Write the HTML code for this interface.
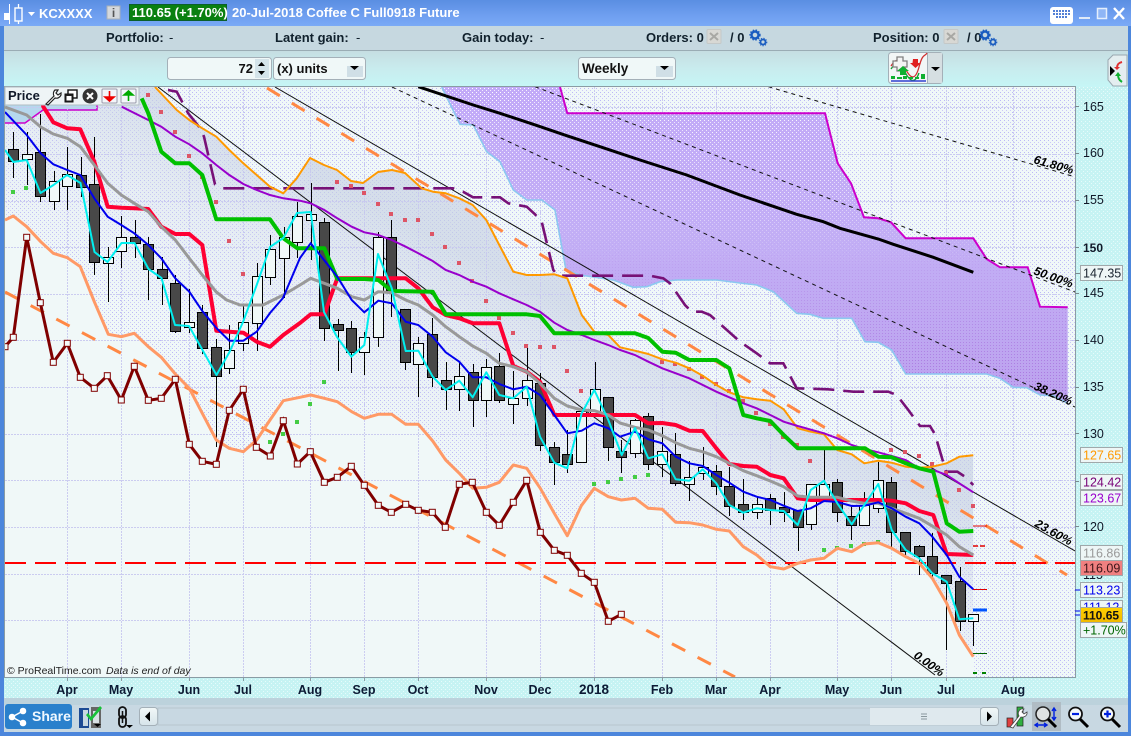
<!DOCTYPE html>
<html><head><meta charset="utf-8"><title>KCXXXX</title>
<style>
html,body{margin:0;padding:0;width:1131px;height:736px;overflow:hidden;background:#c8f4f4}
svg{display:block}
text{font-family:"Liberation Sans",sans-serif}
</style></head><body>
<svg width="1131" height="736" viewBox="0 0 1131 736" xmlns="http://www.w3.org/2000/svg">
<defs>
<linearGradient id="tb" x1="0" y1="0" x2="0" y2="1"><stop offset="0" stop-color="#5a8ee2"/><stop offset=".6" stop-color="#6f9ff0"/><stop offset="1" stop-color="#7aaaf6"/></linearGradient>
<linearGradient id="tool" x1="0" y1="0" x2="0" y2="1"><stop offset="0" stop-color="#c6dee2"/><stop offset=".5" stop-color="#c8ecee"/><stop offset="1" stop-color="#c6f6f6"/></linearGradient>
<linearGradient id="cl" x1="0" y1="87" x2="0" y2="405" gradientUnits="userSpaceOnUse"><stop offset="0" stop-color="#c2aaf8"/><stop offset=".5" stop-color="#c2aef5"/><stop offset="1" stop-color="#bca2ee"/></linearGradient>
<linearGradient id="band" gradientUnits="userSpaceOnUse" x1="0" y1="20" x2="-92" y2="204"><stop offset="0" stop-color="#c6d0e2" stop-opacity=".65"/><stop offset=".45" stop-color="#d0d6ea" stop-opacity=".3"/><stop offset="1" stop-color="#d4d8f0" stop-opacity="0"/></linearGradient>
<linearGradient id="btn" x1="0" y1="0" x2="0" y2="1"><stop offset="0" stop-color="#f2f8f8"/><stop offset="1" stop-color="#d6e4ea"/></linearGradient>
<linearGradient id="gold" x1="0" y1="0" x2="0" y2="1"><stop offset="0" stop-color="#ffd000"/><stop offset="1" stop-color="#f0b800"/></linearGradient>
<linearGradient id="mt" gradientUnits="userSpaceOnUse" x1="0" y1="87" x2="0" y2="270"><stop offset="0" stop-color="#fff"/><stop offset=".6" stop-color="#aaa"/><stop offset="1" stop-color="#000"/></linearGradient>
<linearGradient id="mb" gradientUnits="userSpaceOnUse" x1="0" y1="230" x2="0" y2="400"><stop offset="0" stop-color="#000"/><stop offset="1" stop-color="#fff"/></linearGradient>
<mask id="mtop" maskUnits="userSpaceOnUse" x="0" y="0" width="1131" height="736"><rect width="1131" height="736" fill="url(#mt)"/></mask>
<mask id="mbot" maskUnits="userSpaceOnUse" x="0" y="0" width="1131" height="736"><rect width="1131" height="736" fill="url(#mb)"/></mask>
<pattern id="dots" width="4" height="4" patternUnits="userSpaceOnUse"><rect x="0" y="0" width="1" height="1" fill="#bcb8f6"/><rect x="2" y="2" width="1" height="1" fill="#ccc8f8"/></pattern>
<pattern id="wd" width="4" height="4" patternUnits="userSpaceOnUse"><rect x="0" y="0" width="1" height="1" fill="#fff"/><rect x="2" y="2" width="1" height="1" fill="#f4eeff"/></pattern>
<pattern id="pd" width="3" height="3" patternUnits="userSpaceOnUse"><rect x="0" y="0" width="1" height="1" fill="#a060d8" opacity=".7"/></pattern>
<pattern id="ax" width="4" height="4" patternUnits="userSpaceOnUse"><rect width="4" height="4" fill="#c6f3f3"/><rect x="1" y="1" width="1" height="1" fill="#e6fbfb"/><rect x="3" y="3" width="1" height="1" fill="#e6fbfb"/></pattern>
<clipPath id="chart"><rect x="5" y="87" width="1070" height="590"/></clipPath>
<clipPath id="belowOr"><polygon points="5,87 155,87 176.7,110 189.3,120 202.3,128.3 216.3,136.7 229.3,150 243.3,163.3 256.7,175 270,186.7 283.3,193.3 296.7,178.3 310,158 324,165 337,170 351,181 363,183 378,172 392,170 405,173 421.7,188.3 433,191.7 445.7,193.3 459.3,198.3 472.7,205 486.3,220 499.3,245 513.3,271.7 526.7,275 540,275 554.3,274.3 567.3,278.3 581.7,315 594.3,331.7 608.3,335 620,347.3 635,350.7 648.3,354 662.3,359.3 675.7,362.7 689.3,368.3 702.7,375.7 716.3,385 729.3,392.3 743.3,397.3 756.7,399.3 770.3,400.7 783.7,409.3 797.7,428.3 810.7,431.7 824,434.3 837.3,450 851.7,454.3 864.3,463.3 878.3,460.7 891.7,462.7 905.7,466.7 919.3,467.7 932.3,466.7 946.7,463.3 959.3,456.7 973.3,455.3 973.3,677 5,677"/></clipPath>
<polygon id="cloud" points="560,87 567.3,113.3 825,113.3 837.7,163.3 851,183.3 864,217.3 878.3,218.3 891,222.3 905.7,238.3 973.3,238.3 986.7,259 1000,267.3 1027.7,267.3 1040,306.7 1067.7,307.3 1067.7,403.3 1053.3,395.7 1040,395 1026.7,387.7 1013.3,387.3 1000,378.3 986.7,374 905.7,374 891.7,350 878.3,342.3 865,341.7 851.7,318.3 823.3,318.3 810,314.3 796.7,313.3 773.3,291.7 756.7,285 740,283 716.7,280 676.7,280 660,281.7 646.7,286.7 633.3,287.3 613.3,280 580,275 566,270 555,210 541.7,200 526.7,200 513.3,190 500,161.7 486.7,151.7 473.3,125 460,124.3 441.7,87"/>
<marker id="sq" markerUnits="userSpaceOnUse" markerWidth="8" markerHeight="8" refX="4" refY="4"><rect x="1" y="1" width="6" height="6" fill="#f4fafa" stroke="#800000" stroke-width="1"/></marker>
</defs>

<!-- frame -->
<rect width="1131" height="736" fill="#4c86dc"/>
<rect x="0" y="0" width="1131" height="26" fill="url(#tb)"/>
<rect x="4" y="26" width="1124" height="25" fill="#c6d8e0"/>
<rect x="4" y="50" width="1124" height="1" fill="#9aacb4"/>
<rect x="4" y="51" width="1124" height="36" fill="url(#tool)"/>
<rect x="1075" y="87" width="53" height="611" fill="url(#ax)"/>
<rect x="4" y="677" width="1071" height="21" fill="url(#ax)"/>
<rect x="4" y="698" width="1124" height="7" fill="#bcd2dc"/>
<rect x="4" y="705" width="1124" height="27" fill="#c8d8e2"/>

<!-- chart background -->
<g clip-path="url(#chart)">
<rect x="5" y="87" width="1070" height="590" fill="#f0f8f8"/>
<polygon fill="url(#dots)" points="5,220 13.3,216 26.7,226.7 40.7,241.7 53.3,253.3 67.3,257.7 80.3,266.7 94.3,301.7 108.3,334.3 121.3,336.7 134.3,333.3 148.3,346.7 161.3,357.3 175.3,374 189.3,388.3 202.3,413.3 216.3,440 229.3,448.3 243.3,451.7 256.7,440 270,420 283.3,400.7 300,397.3 310.7,395 324.3,398.3 337.3,401.7 351.7,411.7 364.3,418.3 378.3,414.3 391.7,414.3 405.7,424.3 418.3,424.3 432.7,441 445.7,460 459.3,473.3 472.7,488.3 486.3,487.3 499.3,482.3 513.3,465 526.7,468.3 540.3,488.3 554.3,513.3 567.3,535.7 581.3,505.7 594.3,488.3 608.3,496.7 621.3,500 635,498.3 648.3,508.3 662.3,509.3 675.7,522.3 689.3,522.7 702.7,525 716.3,529.3 729.3,531 743.3,546.7 756.7,555 770.3,566.7 783.7,569 797.7,563.3 810.7,560 824,558.3 837.3,548.3 851.7,551.7 864.3,544 878.3,542.7 891.7,548.3 905.7,556.7 919.3,563.3 932.3,578.3 946.7,603.3 959.3,635 973.3,656.7 973.3,677 1075,677 1075,87 5,87"/>
<polygon clip-path="url(#belowOr)" fill="url(#band)" points="5,220 13.3,216 26.7,226.7 40.7,241.7 53.3,253.3 67.3,257.7 80.3,266.7 94.3,301.7 108.3,334.3 121.3,336.7 134.3,333.3 148.3,346.7 161.3,357.3 175.3,374 189.3,388.3 202.3,413.3 216.3,440 229.3,448.3 243.3,451.7 256.7,440 270,420 283.3,400.7 300,397.3 310.7,395 324.3,398.3 337.3,401.7 351.7,411.7 364.3,418.3 378.3,414.3 391.7,414.3 405.7,424.3 418.3,424.3 432.7,441 445.7,460 459.3,473.3 472.7,488.3 486.3,487.3 499.3,482.3 513.3,465 526.7,468.3 540.3,488.3 554.3,513.3 567.3,535.7 581.3,505.7 594.3,488.3 608.3,496.7 621.3,500 635,498.3 648.3,508.3 662.3,509.3 675.7,522.3 689.3,522.7 702.7,525 716.3,529.3 729.3,531 743.3,546.7 756.7,555 770.3,566.7 783.7,569 797.7,563.3 810.7,560 824,558.3 837.3,548.3 851.7,551.7 864.3,544 878.3,542.7 891.7,548.3 905.7,556.7 919.3,563.3 932.3,578.3 946.7,603.3 959.3,635 973.3,656.7 973.3,87 5,87"/>

<!-- small cloud top-left -->
<polygon fill="#b6d8ee" points="5,87 97,87 97,110 43,110 25,123 5,123"/>
<polyline fill="none" stroke="#cc00cc" stroke-width="1.5" points="5,123 25,123 43,110 97,110 97,97"/>

<!-- grid -->
<g stroke="#c8c8f0" stroke-width="1" stroke-dasharray="2 1" fill="none" opacity=".9">
<path d="M5 107.5H1075M5 154.5H1075M5 201.5H1075M5 247.5H1075M5 294.5H1075M5 340.5H1075M5 387.5H1075M5 434.5H1075M5 480.5H1075M5 527.5H1075M5 574.5H1075M5 620.5H1075"/>
<path d="M67.5 87V677M121.5 87V677M189.5 87V677M243.5 87V677M310.5 87V677M364.5 87V677M418.5 87V677M486.5 87V677M540.5 87V677M594.5 87V677M662.5 87V677M716.5 87V677M770.5 87V677M837.5 87V677M891.5 87V677M946.5 87V677M1013.5 87V677"/>
</g>

<!-- main cloud -->
<use href="#cloud" fill="url(#cl)"/>
<use href="#cloud" fill="url(#wd)" mask="url(#mtop)"/>
<use href="#cloud" fill="url(#pd)" mask="url(#mbot)"/>
<polyline fill="none" stroke="#8cc8f0" stroke-width="1.6" points="441.7,87 460,124.3 473.3,125 486.7,151.7 500,161.7 513.3,190 526.7,200 541.7,200 555,210 566,270 580,275 613.3,280 633.3,287.3 646.7,286.7 660,281.7 676.7,280 716.7,280 740,283 756.7,285 773.3,291.7 796.7,313.3 810,314.3 823.3,318.3 851.7,318.3 865,341.7 878.3,342.3 891.7,350 905.7,374 986.7,374 1000,378.3 1013.3,387.3 1026.7,387.7 1040,395 1053.3,395.7 1067.7,403.3"/>
<polyline fill="none" stroke="#cc00cc" stroke-width="2" points="560,87 567.3,113.3 825,113.3 837.7,163.3 851,183.3 864,217.3 878.3,218.3 891,222.3 905.7,238.3 973.3,238.3 986.7,259 1000,267.3 1027.7,267.3 1040,306.7 1067.7,307.3"/>

<!-- trend lines -->
<g fill="none" stroke="#111" stroke-width="1">
<path d="M275 87L1075 551"/>
<path d="M158 87L935 675"/>
<path d="M768.3 86.7L1072 176" stroke-dasharray="4 4"/>
<path d="M535 86.7L1075 292" stroke-dasharray="4 4"/>
<path d="M392 87L1075 407" stroke-dasharray="4 4"/>
</g>
<polyline fill="none" stroke="#000" stroke-width="3" points="418.3,86.7 473.3,105 500,113.3 533.3,124.3 566.7,135.7 600,146.7 640,160 686.7,175 740,195 796.7,214.3 823.3,221.7 840,228.3 878.3,239 893.3,244.3 933.3,257.3 973.3,272.3"/>

<!-- dashed orange -->
<g fill="none" stroke="#ff8844" stroke-width="3" stroke-dasharray="15 14">
<path d="M267 88L1067 575"/>
<path d="M5 292L735 677"/>
</g>
<!-- dashed purple -->
<polyline fill="none" stroke="#771177" stroke-width="2.6" stroke-dasharray="21 9" points="168,90 176.7,91.7 188,113 200,128 204,136.7 215,184.3 221.7,188.3 453,188.3 463,191.7 473,197.3 500,197.3 508.3,203.3 526.7,206.7 535,214.3 541.7,221.7 553.3,270 558.3,275.7 650,275.7 663.3,278.3 670,283.3 685,305 691.7,311.7 701.7,311.7 710,315 740,341.7 756.7,353.3 770,363.3 783.3,363.3 796.7,388.3 828.3,389.3 853.3,391.7 888.3,391.7 896.7,395 908.3,410 920,426 930,426 935,434.3 946,471.7 957.3,471.7 965,476.7 973.3,485"/>

<!-- red dash horizontal -->
<path d="M5 563H1075" stroke="#ff0000" stroke-width="2" stroke-dasharray="21 9" fill="none"/>

<!-- squares -->
<g fill="#dd5566"><path d="M146 93h4v4h-4zM159 110h4v4h-4zM173 130h4v4h-4zM187 154h4v4h-4zM200 175h4v4h-4zM214 200h4v4h-4zM227 239h4v4h-4zM241 272h4v4h-4zM335 180h4v4h-4zM349 184h4v4h-4zM362 191h4v4h-4zM376 202h4v4h-4zM389 212h4v4h-4zM403 218h4v4h-4zM416 218h4v4h-4zM430 232h4v4h-4zM443 245h4v4h-4zM457 261h4v4h-4zM470 279h4v4h-4zM484 299h4v4h-4zM497 316h4v4h-4zM511 331h4v4h-4zM524 344h4v4h-4zM538 345h4v4h-4zM552 345h4v4h-4zM565 369h4v4h-4zM579 389h4v4h-4zM660 360h4v4h-4zM673 362h4v4h-4zM687 367h4v4h-4zM700 375h4v4h-4zM714 382h4v4h-4zM727 389h4v4h-4zM741 399h4v4h-4zM754 411h4v4h-4zM768 422h4v4h-4zM781 435h4v4h-4zM795 443h4v4h-4zM808 459h4v4h-4zM889 448h4v4h-4zM903 450h4v4h-4zM917 454h4v4h-4zM930 462h4v4h-4zM944 471h4v4h-4zM957 488h4v4h-4zM971 504h4v4h-4z"/></g>
<g fill="#44cc44"><path d="M11 190h4v4h-4zM24 186h4v4h-4zM268 440h4v4h-4zM281 432h4v4h-4zM295 420h4v4h-4zM308 402h4v4h-4zM322 380h4v4h-4zM592 482h4v4h-4zM606 480h4v4h-4zM619 477h4v4h-4zM633 475h4v4h-4zM646 473h4v4h-4zM822 548h4v4h-4zM835 546h4v4h-4zM849 544h4v4h-4zM862 542h4v4h-4zM876 540h4v4h-4z"/></g>
<path d="M973 672h4v2h-4zM982 672h4v2h-4z" fill="#008000"/>

<!-- wicks -->
<path fill="none" stroke="#000" stroke-width="1" shape-rendering="crispEdges" d="M13.5 132V178M27.5 132V185M40.5 114V202M54.5 171V210M67.5 147V210M81.5 157V197M94.5 137V275M108.5 247V302M121.5 216V268M135.5 220V258M148.5 237V300M162.5 257V305M175.5 275V333M189.5 289V333M202.5 305V354M216.5 339V447M229.5 325V374M243.5 305V351M257.5 263V351M270.5 235V285M284.5 227V298M297.5 202V258M311.5 183V260M324.5 218V341M338.5 319V371M351.5 321V373M364.5 332V375M378.5 232V347M391.5 220V317M405.5 309V370M418.5 337V397M432.5 318V387M446.5 362V410M459.5 362V411M473.5 364V427M486.5 359V417M499.5 353V403M513.5 371V424M527.5 348V406M540.5 373V451M554.5 442V485M567.5 430V473M581.5 411V463M595.5 362V414M608.5 397V461M621.5 440V473M635.5 419V458M648.5 413V470M662.5 427V477M675.5 433V486M689.5 461V501M703.5 447V480M716.5 465V495M729.5 467V516M743.5 479V520M757.5 497V519M770.5 494V525M784.5 492V522M798.5 510V551M811.5 484V530M824.5 450V500M837.5 479V522M851.5 507V540M864.5 492V525M878.5 462V513M891.5 477V548M905.5 532V557M919.5 545V575M932.5 533V578M946.5 575V650M960.5 567V631M973.5 614V646"/>
<!-- white bodies -->
<path fill="#f0f8f8" stroke="#000" stroke-width="1" shape-rendering="crispEdges" d="M22.5 154.5h10v5h-10zM49.5 181.5h10v20h-10zM62.5 174.5h10v12h-10zM103.5 257.5h10v6h-10zM116.5 237.5h10v14h-10zM184.5 322.5h10v5h-10zM224.5 350.5h10v18h-10zM238.5 322.5h10v21h-10zM252.5 276.5h10v47h-10zM265.5 249.5h10v28h-10zM279.5 237.5h10v21h-10zM292.5 216.5h10v26h-10zM306.5 214.5h10v6h-10zM359.5 337.5h10v15h-10zM373.5 237.5h10v100h-10zM413.5 343.5h10v21h-10zM454.5 376.5h10v13h-10zM481.5 367.5h10v33h-10zM508.5 398.5h10v6h-10zM522.5 380.5h10v18h-10zM576.5 411.5h10v51h-10zM590.5 389.5h10v24h-10zM630.5 420.5h10v33h-10zM657.5 451.5h10v13h-10zM684.5 477.5h10v7h-10zM698.5 467.5h10v6h-10zM752.5 504.5h10v8h-10zM806.5 484.5h10v40h-10zM819.5 484.5h10v13h-10zM859.5 505.5h10v20h-10zM873.5 480.5h10v28h-10zM968.5 614.5h10v7h-10z"/>
<!-- dark bodies -->
<path fill="#484848" stroke="#000" stroke-width="1" shape-rendering="crispEdges" d="M8.5 149.5h10v12h-10zM35.5 152.5h10v44h-10zM76.5 175.5h10v12h-10zM89.5 184.5h10v78h-10zM130.5 237.5h10v6h-10zM143.5 244.5h10v25h-10zM157.5 269.5h10v9h-10zM170.5 283.5h10v48h-10zM197.5 312.5h10v36h-10zM211.5 347.5h10v29h-10zM319.5 222.5h10v106h-10zM333.5 324.5h10v6h-10zM346.5 328.5h10v24h-10zM386.5 237.5h10v53h-10zM400.5 309.5h10v53h-10zM427.5 334.5h10v43h-10zM441.5 380.5h10v9h-10zM468.5 372.5h10v28h-10zM494.5 366.5h10v34h-10zM535.5 383.5h10v62h-10zM549.5 447.5h10v15h-10zM562.5 454.5h10v10h-10zM603.5 397.5h10v50h-10zM616.5 451.5h10v6h-10zM643.5 416.5h10v48h-10zM670.5 454.5h10v29h-10zM711.5 471.5h10v15h-10zM724.5 486.5h10v20h-10zM738.5 504.5h10v8h-10zM765.5 498.5h10v12h-10zM779.5 507.5h10v5h-10zM793.5 510.5h10v17h-10zM832.5 482.5h10v30h-10zM846.5 516.5h10v9h-10zM886.5 482.5h10v50h-10zM900.5 532.5h10v19h-10zM914.5 546.5h10v10h-10zM927.5 556.5h10v17h-10zM941.5 575.5h10v8h-10zM955.5 581.5h10v40h-10z"/>

<!-- salmon band -->
<polyline fill="none" stroke="#ff9966" stroke-width="3" stroke-linejoin="round" points="5,220 13.3,216 26.7,226.7 40.7,241.7 53.3,253.3 67.3,257.7 80.3,266.7 94.3,301.7 108.3,334.3 121.3,336.7 134.3,333.3 148.3,346.7 161.3,357.3 175.3,374 189.3,388.3 202.3,413.3 216.3,440 229.3,448.3 243.3,451.7 256.7,440 270,420 283.3,400.7 300,397.3 310.7,395 324.3,398.3 337.3,401.7 351.7,411.7 364.3,418.3 378.3,414.3 391.7,414.3 405.7,424.3 418.3,424.3 432.7,441 445.7,460 459.3,473.3 472.7,488.3 486.3,487.3 499.3,482.3 513.3,465 526.7,468.3 540.3,488.3 554.3,513.3 567.3,535.7 581.3,505.7 594.3,488.3 608.3,496.7 621.3,500 635,498.3 648.3,508.3 662.3,509.3 675.7,522.3 689.3,522.7 702.7,525 716.3,529.3 729.3,531 743.3,546.7 756.7,555 770.3,566.7 783.7,569 797.7,563.3 810.7,560 824,558.3 837.3,548.3 851.7,551.7 864.3,544 878.3,542.7 891.7,548.3 905.7,556.7 919.3,563.3 932.3,578.3 946.7,603.3 959.3,635 973.3,656.7"/>
<!-- orange band -->
<polyline fill="none" stroke="#ff9900" stroke-width="2" stroke-linejoin="round" points="155,87 176.7,110 189.3,120 202.3,128.3 216.3,136.7 229.3,150 243.3,163.3 256.7,175 270,186.7 283.3,193.3 296.7,178.3 310,158 324,165 337,170 351,181 363,183 378,172 392,170 405,173 421.7,188.3 433,191.7 445.7,193.3 459.3,198.3 472.7,205 486.3,220 499.3,245 513.3,271.7 526.7,275 540,275 554.3,274.3 567.3,278.3 581.7,315 594.3,331.7 608.3,335 620,347.3 635,350.7 648.3,354 662.3,359.3 675.7,362.7 689.3,368.3 702.7,375.7 716.3,385 729.3,392.3 743.3,397.3 756.7,399.3 770.3,400.7 783.7,409.3 797.7,428.3 810.7,431.7 824,434.3 837.3,450 851.7,454.3 864.3,463.3 878.3,460.7 891.7,462.7 905.7,466.7 919.3,467.7 932.3,466.7 946.7,463.3 959.3,456.7 973.3,455.3"/>
<!-- purple MA -->
<polyline fill="none" stroke="#9900cc" stroke-width="2" points="121.7,106.7 148.3,120 161.3,126.7 175.3,136.7 189.3,144.3 202.3,153.3 216.3,165 229.3,175 243.3,184 256.7,190 270,195 283.3,198.3 300,200.7 310.7,203.3 324.3,210 337.3,218.3 351.7,226.7 364.3,232.3 378.3,235 391.7,240 405.7,246.7 418.3,253.3 432.7,261 445.7,270 459.3,275 472.7,281.7 486.3,286.7 499.3,293.3 513.3,299.3 526.7,305 540,311.7 554.3,322.7 567.3,330 581.7,335 594.3,340 608.3,345 620,350 635,355 648.3,361.7 662.3,368.3 689.3,378.3 716.3,391.7 729.3,397.3 743.3,403.3 756.7,408.3 770.3,415 783.7,421.7 797.7,426 824,433.3 837.3,438.3 851.7,445 864.3,449 878.3,452.3 891.7,456 905.7,460 919.3,468.3 933.3,470 946.7,475 959.3,483.3 973.3,492.3"/>
<!-- red thick -->
<polyline fill="none" stroke="#ff0033" stroke-width="4" stroke-linejoin="round" points="40,90 43.3,106.7 53.3,122.3 67.3,128.3 80.3,129.3 94.3,161.7 107.7,206.7 121.3,207.7 134.3,208.3 148.3,209 161.3,226.7 175.3,234 189.3,234 202.3,245 216.3,330.7 229.3,331.7 243.3,332.7 256.7,341.7 270,346.7 283.3,335 300,323 310.7,314.3 324.3,314.3 337.3,278.3 405.7,278.3 418.3,288.3 432.7,307.3 445.7,315 459.3,318.3 472.7,323.3 499.3,323.3 513.3,366 526.7,371.7 540,381.7 554.3,415 635,415 648.3,423.3 662.3,423 675.7,425 689.3,430.7 702.7,431 716.3,448.3 729.3,464 743.3,466 756.7,466.7 770.3,475 783.7,478.3 797.7,498.3 810.7,500 878.3,500 891.7,500.7 905.7,503.3 919.3,511 933.3,515 946.7,554 973.3,555"/>
<!-- green thick -->
<polyline fill="none" stroke="#00c000" stroke-width="4" stroke-linejoin="round" points="141.7,98.3 148.3,113.3 161.3,151.7 175.3,163.3 189.3,163.3 202.3,175 216.3,219.3 270,219.3 283.3,238.3 297.3,248.3 324.3,248.3 337.3,279 364.3,279 378.3,280 391.7,291 432.7,291.7 445.7,314.3 526.7,314.3 540,316 554.3,333.3 635,333.3 648.3,338 662.3,351.7 675.7,352.7 689.3,360 716.3,360 729.3,368.3 743.3,415 756.7,418.3 770.3,421 783.7,435 797.7,448.3 865,448.3 878.3,456.7 891.7,457.3 905.7,463.3 919.3,468.3 933.3,471.7 946.7,523.3 959.3,531.7 973.3,531"/>
<!-- gray MA -->
<polyline fill="none" stroke="#999" stroke-width="3" stroke-linejoin="round" points="5,107 26.7,115 40.7,127 53.3,134 67.3,138.3 80.3,146.7 94.3,165 107.7,183.3 121.3,195 134.3,203.3 148.3,211.7 161.3,226.7 175.3,240 189.3,258.3 202.3,275 216.3,292 226.7,300 240,305 263,305 283.3,295 300,285 310.7,278.3 324.3,283.3 337.3,288.3 351.7,296.7 364.3,300 378.3,291.7 391.7,292.7 405.7,300 418.3,305 432.7,315 445.7,326.7 459.3,336.7 472.7,346 486.3,353.3 499.3,363.3 513.3,366.7 526.7,371.7 540,383.3 554.3,398.3 567.3,406 581.7,410 594.3,410.7 608.3,415 620,423 635,427.3 648.3,430 662.3,435.7 675.7,442.7 689.3,448.3 702.7,451.7 716.3,456.7 729.3,463.3 743.3,470.7 756.7,475.7 770.3,481 783.7,486.7 797.7,496 810.7,497.3 837.3,497.3 851.7,501 864.3,503.3 878.3,503.3 891.7,508.3 905.7,513.3 919.3,518.3 933.3,526.7 946.7,535 959.3,546.7 973.3,555"/>
<!-- blue -->
<polyline fill="none" stroke="#0000ee" stroke-width="2" points="5,112 26.7,135 40.7,153.3 53.3,164.3 67.3,170 80.3,175 94.3,198.3 107.7,216.7 121.3,225 134.3,233.3 148.3,245 161.3,258.3 175.3,278.3 189.3,291.7 202.3,311 216.3,328 229.3,340.7 243.3,340.7 256.7,331.7 270,313 283,298 300,258 310.7,243.3 324,260 337.3,276.7 351.7,300 364.3,312.3 378.3,300.7 391.7,303.3 405.7,321.7 418.3,325 432.7,336.7 445.7,352.3 459.3,361.7 472.7,377.3 486.3,377.3 499.3,384 513.3,389.3 526.7,386.7 540,395 554.3,415 567.3,433.3 581.7,430.7 594.3,423.3 608.3,428.3 620,436.7 635,431.7 648.3,439.3 662.3,443.3 675.7,456.7 689.3,463.3 702.7,466 716.3,475 729.3,482.7 743.3,491.7 756.7,496.7 770.3,500 783.7,505.7 797.7,511 810.7,508.3 824,501 837.3,502 851.7,506 864.3,505.7 878.3,502.3 891.7,508.3 905.7,516.7 919.3,523.3 932.3,536.7 946.7,555 959.3,576.7 973.3,589.3"/>
<!-- cyan -->
<polyline fill="none" stroke="#00eeee" stroke-width="2" stroke-linejoin="round" points="5,150 13.3,162 26.7,160 40.5,193 53.5,185 67,175 80.5,183 94.5,252 107.5,262 121.5,243 134.5,243 148.5,269 161.5,278 175,325 189,326 202.5,350 216.5,375 229.5,352 243,322 256.7,285 270,247 283.3,238 297,213 310.7,212 324,312 337,337 351.3,356.7 364.3,345 378,254 391.7,288 405.7,351 418.3,350.7 432.7,376.7 445.7,390 459.3,380.7 472.7,397.3 486.3,372.3 499.3,395 513.3,398.3 526.7,386.7 540,436.7 554.3,462.7 567.3,468.3 581.7,413.3 594.3,390 608.3,420 621.7,455 635,428 648.3,458.3 662.3,454.3 675.7,479.3 689.3,480.7 702.7,469.3 716.3,483.3 729.3,505 743.3,512.7 756.7,508.3 770.3,510 783.7,511 797.7,525 810.7,490 824,480.7 837.3,503.3 851.7,524.3 864.3,505 878.3,484 891.7,530 905.7,550 919.3,558.3 932.3,573.3 946.7,581.7 959.3,619.3 973.3,618.3"/>
<!-- maroon -->
<polyline fill="none" stroke="#800000" stroke-width="3" marker-start="url(#sq)" marker-mid="url(#sq)" marker-end="url(#sq)" points="5,346.7 13.3,337.3 26.7,237.3 40.3,302.7 53.3,362.3 67.3,343.3 80.3,377.3 94.3,388.3 107.3,375.7 121.3,400 134.3,366.3 148.3,400.3 161.3,398.3 175.3,379.3 189.3,444.3 202.3,461.3 216.3,464.3 229.3,410.3 243.3,389.3 256.3,447.3 270.3,456 283.3,420.7 297.3,464 310.3,451.7 324.3,482.3 337.3,477.3 351.3,466.3 364.3,485.3 378.3,505.3 391.3,512.3 405.7,504.3 418.3,510.3 432.3,512.3 445.3,527.3 459.3,484.3 472.3,482.3 486.3,512.3 499.3,525.3 513.3,502.3 526.7,480.3 540.3,532.3 554.3,550.3 567.3,555.3 581.3,573.3 594.3,582.3 608.3,621.3 621.3,614.3"/>

<!-- end ticks -->
<path d="M973 526h14" stroke="#e00000" stroke-width="1"/>
<path d="M973 546h14" stroke="#e00000" stroke-width="1.5" stroke-dasharray="5 2"/>
<path d="M973 589.5h14" stroke="#e00000" stroke-width="1"/>
<path d="M973 610h14" stroke="#0055ff" stroke-width="3"/>
<path d="M973 653.5h14" stroke="#006000" stroke-width="1"/>

<!-- fib labels -->
<g font-size="12" font-weight="bold" fill="#000" font-style="italic">
<text transform="translate(1033,163) rotate(16)">61.80%</text>
<text transform="translate(1033,274) rotate(20)">50.00%</text>
<text transform="translate(1033,389) rotate(24)">38.20%</text>
<text transform="translate(1034,526) rotate(29)">23.60%</text>
<text transform="translate(913,657) rotate(36)">0.00%</text>
</g>

<text x="7" y="674" font-size="10.5" fill="#222">© ProRealTime.com</text>
<text x="106" y="674" font-size="10.5" fill="#222" font-style="italic">Data is end of day</text>
</g>

<!-- chart border -->
<rect x="4.5" y="86.5" width="1071" height="591" fill="none" stroke="#8a9ca4"/>

<!-- Price label -->
<rect x="5" y="87" width="134" height="18" fill="#eef4f6" stroke="#b0bcc2"/>
<text x="8" y="100" font-size="13" font-weight="bold" fill="#101828">Price</text>
<path d="M46 104l8-8a5 5 0 0 1 1-6l3 0-2 3 2 2 3-2 0 2a5 5 0 0 1-6 3l-7 7z" fill="#fff" stroke="#222" stroke-width="1.2"/>
<rect x="68" y="90" width="9" height="8" fill="#fff" stroke="#111" stroke-width="1.4"/><rect x="65" y="94" width="8" height="8" fill="#222" stroke="#111"/><rect x="66.5" y="96" width="5" height="4.5" fill="#fff"/>
<circle cx="90" cy="96" r="7.5" fill="#333"/><path d="M87 93l6 6M93 93l-6 6" stroke="#fff" stroke-width="2"/>
<rect x="102" y="89" width="15" height="14" rx="1" fill="#f4f6fa" stroke="#99a"/><path d="M109.5 91v6M105 97h9l-4.500 4z" stroke="#e00" fill="#e00" stroke-width="1.6"/>
<rect x="121" y="89" width="15" height="14" rx="1" fill="#f4f6fa" stroke="#99a"/><path d="M128.500 101v-6M124 95h9l-4.500-4z" stroke="#0a0" fill="#0a0" stroke-width="1.600"/>

<!-- title bar -->
<path d="M9.500 4V24" stroke="#fff"/>
<rect x="4" y="13" width="6" height="7" fill="#fff"/>
<rect x="15" y="8" width="7" height="13" fill="none" stroke="#fff" stroke-width="1.4"/>
<path d="M18.500 4v4M18.500 21v3" stroke="#fff" stroke-width="1.300"/>
<path d="M28 12h7l-3.500 4z" fill="#fff"/>
<text x="39" y="18" font-size="13" font-weight="bold" fill="#fff">KCXXXX</text>
<rect x="107" y="6" width="13" height="13" fill="#d4d8dc" stroke="#a8b0b8"/>
<text x="113.500" y="17" font-size="12" font-weight="bold" text-anchor="middle" fill="#555" font-family="Liberation Serif">i</text>
<rect x="129.500" y="4.500" width="97" height="16" fill="#0a8010" stroke="#0b5f2c"/>
<text x="132" y="17" font-size="13" font-weight="bold" fill="#fff">110.65 (+1.70%)</text>
<text x="232" y="17" font-size="13" font-weight="bold" fill="#fff">20-Jul-2018 Coffee C Full0918 Future</text>
<!-- window buttons -->
<rect x="1050" y="7" width="23" height="17" rx="3" fill="#fff"/>
<path d="M1053 11h17M1053 14h17M1056 17h11" stroke="#3b6fd0" stroke-width="1.800" stroke-dasharray="2 1"/>
<rect x="1079" y="17" width="11" height="2" fill="#dfeaf8"/>
<rect x="1097.500" y="8.500" width="9" height="10" fill="#8fb6f6" stroke="#e4eefc" stroke-width="1.500"/>
<path d="M1114 8l10 11M1124 8l-10 11" stroke="#fff" stroke-width="2.400"/>

<!-- toolbar text -->
<g font-size="13" font-weight="bold" fill="#10202c">
<text x="106" y="42">Portfolio:</text><text x="169" y="42" font-weight="normal">-</text>
<text x="275" y="42">Latent gain:</text><text x="356" y="42" font-weight="normal">-</text>
<text x="462" y="42">Gain today:</text><text x="540" y="42" font-weight="normal">-</text>
<text x="646" y="42">Orders: 0</text><text x="730" y="42">/ 0</text>
<text x="873" y="42">Position: 0</text><text x="967" y="42">/ 0</text>
</g>
<rect x="707" y="29.500" width="14" height="14" rx="1" fill="#d8d8d4" stroke="#c4c8c8"/><path d="M710 33l8 7M718 33l-8 7" stroke="#a8a8a4" stroke-width="2"/>
<rect x="944" y="29.500" width="14" height="14" rx="1" fill="#d8d8d4" stroke="#c4c8c8"/><path d="M947 33l8 7M955 33l-8 7" stroke="#a8a8a4" stroke-width="2"/>
<g fill="none" stroke="#1a5cc0">
<circle cx="755" cy="35" r="3.500" stroke-width="2.400"/><circle cx="755" cy="35" r="5" stroke-width="1.300" stroke-dasharray="1.500 1.500"/>
<circle cx="763" cy="42" r="2.500" stroke-width="1.800"/><circle cx="763" cy="42" r="3.800" stroke-width="1" stroke-dasharray="1.300 1.300"/>
<circle cx="985" cy="35" r="3.500" stroke-width="2.400"/><circle cx="985" cy="35" r="5" stroke-width="1.300" stroke-dasharray="1.500 1.500"/>
<circle cx="993" cy="42" r="2.500" stroke-width="1.800"/><circle cx="993" cy="42" r="3.800" stroke-width="1" stroke-dasharray="1.300 1.300"/>
</g>

<!-- inputs -->
<rect x="167.500" y="57.500" width="104" height="22" rx="3" fill="#f0f8f8" stroke="#a4b0b8"/>
<text x="253" y="73" font-size="13" font-weight="bold" text-anchor="end" fill="#111">72</text>
<rect x="255" y="59" width="14" height="19" fill="#d4e4ea"/>
<path d="M258 66h7l-3.500-4zM258 71h7l-3.500 4z" fill="#000"/>
<rect x="273.500" y="57.500" width="92" height="22" rx="3" fill="#f0f8f8" stroke="#a4b0b8"/>
<text x="277" y="73" font-size="13" font-weight="bold" fill="#111">(x) units</text>
<rect x="347" y="66" width="16" height="11" fill="#d0dfe6"/>
<path d="M350 66h9l-4.500 4z" fill="#000"/>
<rect x="578.500" y="57.500" width="97" height="22" rx="3" fill="#f0f8f8" stroke="#a4b0b8"/>
<text x="582" y="73" font-size="13.500" font-weight="bold" fill="#111">Weekly</text>
<rect x="656" y="66" width="17" height="11" fill="#d0dfe6"/>
<path d="M660 66h9l-4.500 4z" fill="#000"/>

<!-- indicator button -->
<rect x="888.500" y="52.500" width="54" height="31" rx="3" fill="#f2f6f6" stroke="#a4b0b8"/>
<path d="M927.500 53V83" stroke="#a4b0b8"/>
<rect x="928" y="53" width="14" height="30" fill="#d6dfe2"/>
<path d="M931 67h9l-4.500 4z" fill="#000"/>
<path d="M891 66c5-8 9-8 14 2s10 14 14-1 6-10 8-14" fill="none" stroke="#d03030" stroke-width="1.300"/>
<path d="M891 69c5-7 9-7 14 3s10 12 14 1" fill="none" stroke="#10a030" stroke-width="1.300"/>
<path d="M893 61h4v-4h6v4h4v6h-4v4h-6v-4h-4z" fill="#f4f4f4" stroke="#808080" stroke-width="1.300"/>
<path d="M900 75h6v-4h3l-6-5-6 5h3z" fill="#10b030"/>
<path d="M913 59h5v4h3l-5.500 5-5.500-5h2.500z" fill="#e02020"/>
<path d="M891 79h4v-3h-4zM897 79h5v-2h-5zM903 79h4v-3h-4zM909 79h4v-2h-4zM915 79h4v-2h-4zM921 79h4v-5h-4z" fill="#10b030"/>
<path d="M891 81h35" stroke="#3040d0" stroke-width="1.400"/>

<!-- right tab -->
<path d="M1127 55h-14l-5 5v20l5 6h14z" fill="#e4eef0" stroke="#9aa8b0"/>
<path d="M1115 70l-5 5v-10z" transform="translate(0,1)" fill="#000"/>
<path d="M1122 62c-4 1-5 3-5 6" fill="none" stroke="#e03030" stroke-width="2"/><path d="M1117 70l-3-3h6z" fill="#e03030"/>
<path d="M1122 82c-3-2-4-4-4-8" fill="none" stroke="#10b030" stroke-width="2"/><path d="M1118 72l-3 4h6z" fill="#10b030"/>

<!-- axis labels -->
<path d="M1075 106.500h4M1075 153.500h4M1075 200.500h4M1075 247.500h4M1075 293.500h4M1075 340.500h4M1075 387.500h4M1075 433.500h4M1075 526.500h4M1075 481.500h4M1075 273.500h5" stroke="#7a8a90" fill="none"/>
<g font-size="12.500" fill="#101828">
<text x="1083" y="111">165</text><text x="1083" y="157">160</text><text x="1083" y="204">155</text><text x="1083" y="252" font-weight="bold" font-size="12">150</text><text x="1083" y="297">145</text><text x="1083" y="344">140</text><text x="1083" y="391">135</text><text x="1083" y="438">130</text><text x="1083" y="531">120</text><text x="1083" y="579">115</text>
</g>
<g font-size="12.500" stroke="none">
<rect x="1080.500" y="265.500" width="42" height="15" fill="#eef6f6" stroke="#a0a8aa"/><text x="1083" y="277.500" fill="#1a2430">147.35</text>
<rect x="1080.500" y="447.500" width="42" height="15" fill="#eef6f6" stroke="#a0a8aa"/><text x="1083" y="459.500" fill="#ff9900">127.65</text>
<rect x="1080.500" y="474.500" width="42" height="15" fill="#eef6f6" stroke="#a0a8aa"/><text x="1083" y="486.500" fill="#770077">124.42</text>
<rect x="1080.500" y="490.500" width="42" height="15" fill="#eef6f6" stroke="#a0a8aa"/><text x="1083" y="502.500" fill="#9900cc">123.67</text>
<rect x="1080.500" y="545.500" width="42" height="15" fill="#eef6f6" stroke="#a0a8aa"/><text x="1083" y="557.500" fill="#999">116.86</text>
<rect x="1080.500" y="560.500" width="42" height="15" fill="#f08080" stroke="#a0a8aa"/><text x="1083" y="572.500" fill="#3a1418">116.09</text>
<rect x="1080.500" y="582.500" width="42" height="15" fill="#eef6f6" stroke="#a0a8aa"/><text x="1083" y="594.500" fill="#0000ee">113.23</text>
<rect x="1080.500" y="600.500" width="42" height="10" fill="#eef6f6" stroke="#a0a8aa"/><text x="1083" y="611.500" fill="#0000ee">111.12</text>
<rect x="1080.500" y="607.500" width="42" height="15" fill="url(#gold)" stroke="#a0a8aa"/><text x="1083" y="619.500" fill="#111" font-weight="bold" font-size="12">110.65</text>
<rect x="1080.500" y="622.500" width="46" height="15" fill="#eef6f6" stroke="#a0a8aa"/><text x="1083" y="634.500" fill="#006600">+1.70%</text>
</g>
<path d="M1075 590h5M1075 611h5M1075 615h5" stroke="#0000ee" fill="none"/>

<!-- time axis -->
<path d="M67.500 677v4M121.500 677v4M189.500 677v4M243.500 677v4M310.500 677v4M364.500 677v4M418.500 677v4M486.500 677v4M540.500 677v4M594.500 677v4M662.500 677v4M716.500 677v4M770.500 677v4M837.500 677v4M891.500 677v4M946.500 677v4M1013.500 677v4" stroke="#8a9ca4" fill="none"/>
<g font-size="12.500" font-weight="bold" fill="#0c1a34" text-anchor="middle">
<text x="67" y="694">Apr</text><text x="121" y="694">May</text><text x="189" y="694">Jun</text><text x="243" y="694">Jul</text><text x="310" y="694">Aug</text><text x="364" y="694">Sep</text><text x="418" y="694">Oct</text><text x="486" y="694">Nov</text><text x="540" y="694">Dec</text><text x="594" y="694" font-size="13.500">2018</text><text x="662" y="694">Feb</text><text x="716" y="694">Mar</text><text x="770" y="694">Apr</text><text x="837" y="694">May</text><text x="891" y="694">Jun</text><text x="946" y="694">Jul</text><text x="1013" y="694">Aug</text>
</g>

<!-- bottom bar -->
<rect x="5" y="704" width="67" height="25" rx="3" fill="#2a80cc"/>
<g fill="#fff" stroke="#fff"><circle cx="12" cy="717" r="2.800"/><circle cx="23" cy="711" r="2.800"/><circle cx="23" cy="723" r="2.800"/><path d="M12 717l11-6M12 717l11 6" stroke-width="1.500" fill="none"/></g>
<text x="32" y="721" font-size="14" font-weight="bold" fill="#f0f8ff">Share</text>

<rect x="79" y="708" width="10" height="20" fill="#1c4a94"/><rect x="83" y="710" width="5" height="16" fill="#c8d8e2"/>
<rect x="91" y="707" width="10" height="21" fill="#666"/><rect x="93" y="711" width="6" height="12" fill="#d8e0e4"/>
<path d="M88 713l3 4 9-11 2 2-11 13-5-6z" fill="#18c038"/>
<path d="M94 724h7l-3.500 3z" fill="#000"/>

<g fill="none" stroke="#111" stroke-width="1.800"><rect x="119" y="707" width="7" height="11" rx="3.500"/><rect x="119" y="716" width="7" height="11" rx="3.500"/></g>
<path d="M122.500 711v12" stroke="#111" stroke-width="1.500"/>
<path d="M126 725h7l-3.500 3z" fill="#000"/>

<rect x="139.500" y="707.500" width="18" height="18" rx="3" fill="url(#btn)" stroke="#a4b0b8"/>
<path d="M145 716.500l5-5v10z" fill="#000"/>
<rect x="158" y="708" width="822" height="17" fill="#c8d8e2" stroke="#b8c6ce"/>
<rect x="870" y="708" width="110" height="17" fill="#dfe9ee"/>
<path d="M921 714h6M921 716.500h6M921 719h6" stroke="#8a989e" fill="none"/>
<rect x="980.500" y="707.500" width="18" height="18" rx="3" fill="url(#btn)" stroke="#a4b0b8"/>
<path d="M992 716.500l-5-5v10z" fill="#000"/>

<!-- candle wrench -->
<rect x="1017" y="707" width="6" height="19" fill="#30b040" stroke="#222" stroke-width=".7"/>
<rect x="1007" y="718" width="6" height="9" fill="#e04040" stroke="#222" stroke-width=".7"/>
<path d="M1010 727l9-11a5 5 0 0 1 2-7h3l-2 3 2 2 3-2v2a5 5 0 0 1-6 3l-8 11z" fill="#fff" stroke="#444" stroke-width=".8"/>

<!-- zoom box -->
<rect x="1032" y="702" width="29" height="29" fill="#b0bcc4"/>
<circle cx="1043" cy="714" r="7" fill="#dfe2e2" stroke="#222" stroke-width="1.500"/>
<path d="M1048 719l8 8" stroke="#000" stroke-width="3"/>
<path d="M1054 709v10M1052 711l2-3 2 3M1052 717l2 3 2-3M1036 725h10M1038 723l-3 2 3 2M1044 723l3 2-3 2" stroke="#0020e0" stroke-width="1.400" fill="none"/>

<!-- zoom out/in -->
<circle cx="1075.500" cy="714" r="6.500" fill="#f4f8fa" stroke="#111" stroke-width="1.800"/>
<path d="M1072 714h7" stroke="#0020e0" stroke-width="2.200"/>
<path d="M1080 719l8 8" stroke="#000" stroke-width="3"/>
<circle cx="1107.500" cy="714" r="6.500" fill="#f4f8fa" stroke="#111" stroke-width="1.800"/>
<path d="M1104 714h7M1107.500 710.500v7" stroke="#0020e0" stroke-width="2.200"/>
<path d="M1112 719l8 8" stroke="#000" stroke-width="3"/>
</svg>
</body></html>
